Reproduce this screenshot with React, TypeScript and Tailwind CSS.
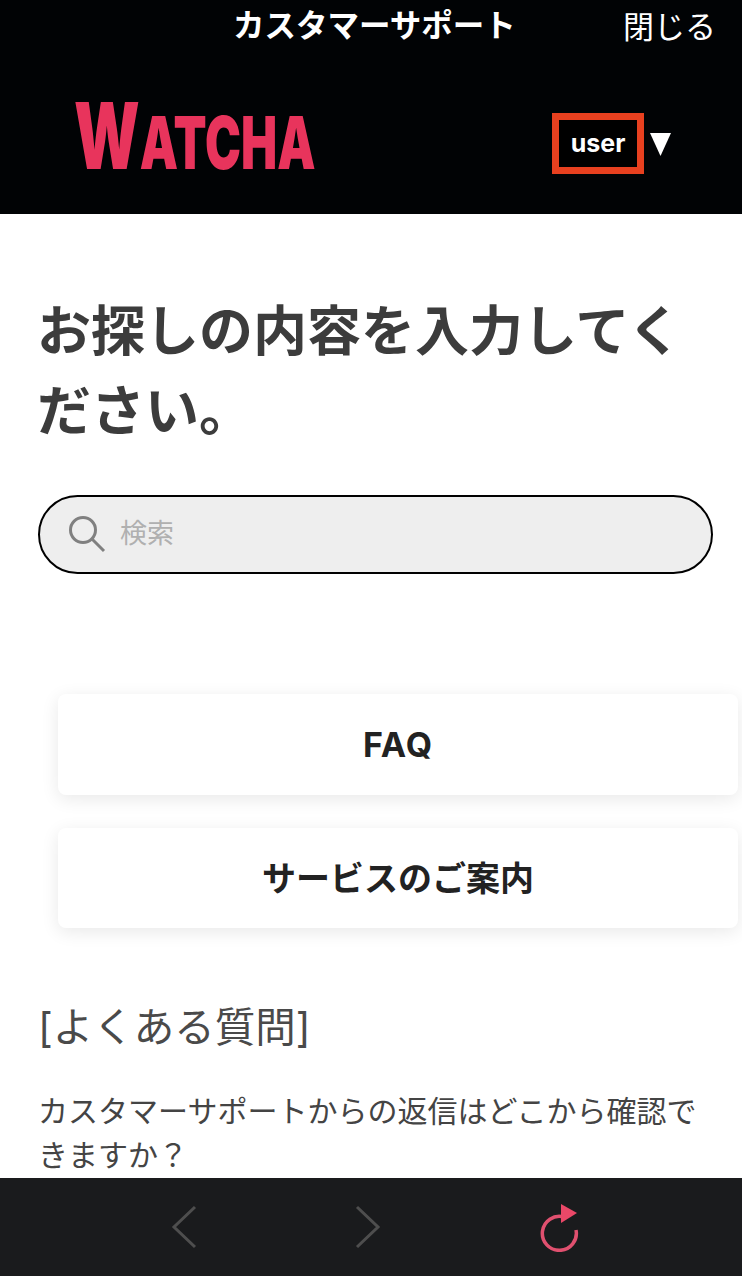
const jp = "font-['Inter','Noto_Sans_CJK_JP',sans-serif]";

export default function App() {
  return (
    <div className={`relative flex h-[1276px] w-[742px] flex-col overflow-hidden bg-white ${jp}`}>
      <header className="h-[214px] shrink-0 bg-[#010305]">
        <div className="flex h-[52px] items-center">
          <div className="ml-[233px] w-[340px] text-[31.5px] font-bold leading-none text-white">カスタマーサポート</div>
          <div className="ml-[50px] text-[31px] leading-none text-white">閉じる</div>
        </div>
        <div className="mt-[61px] flex h-[61px] items-center pl-[74px]">
          <div className="flex w-[478px] origin-left -translate-y-[8px] scale-x-[0.66] items-baseline font-black leading-none text-[#e8345c]">
            <span className="text-[92px]">W</span>
            <span className="text-[73px]">ATCHA</span>
          </div>
          <div className="flex h-[61px] w-[92px] items-center justify-center border-[7px] border-[#e8401f] bg-black text-[25px] font-bold text-white">user</div>
          <svg className="ml-[6px] mt-[2px]" width="21" height="23" viewBox="0 0 21 23" fill="#ffffff"><path d="M0 0h21L10.5 23z" /></svg>
        </div>
      </header>
      <main className="flex-1 overflow-hidden pt-[78px]">
        <h1 className="pl-[37px] pr-[38px] text-[54px] font-bold leading-[80px] text-[#3c3c3c]">お探しの内容を入力してください。</h1>
        <div className="ml-[38px] mr-[29px] mt-[43px] flex h-[79px] items-center rounded-full border-2 border-black bg-[#eeeeee] pl-[28px]">
          <svg className="-mt-[2px]" width="38" height="38" viewBox="0 0 38 38" fill="none" stroke="#808080" strokeWidth="3"><circle cx="15" cy="15" r="12.5" /><path d="M24 24l12 12" /></svg>
          <span className="ml-[14px] text-[27px] text-[#b0b0b0]">検索</span>
        </div>
        <div className="ml-[58px] mr-[4px] mt-[120px] flex flex-col gap-[33px]">
          <div className="flex h-[101px] items-center justify-center rounded-lg bg-white text-[34px] font-bold tracking-[1px] text-[#222222] shadow-[0_4px_18px_rgba(0,0,0,0.09)]">FAQ</div>
          <div className="flex h-[100px] items-center justify-center rounded-lg bg-white text-[34px] font-bold text-[#222222] shadow-[0_4px_18px_rgba(0,0,0,0.09)]">サービスのご案内</div>
        </div>
        <h2 className="mt-[72px] px-[38px] text-[40.5px] leading-[56px] text-[#4a4a4a]">[よくある質問]</h2>
        <p className="mt-[33px] px-[38px] text-[30px] leading-[44px] text-[#444444]">カスタマーサポートからの返信はどこから確認できますか？</p>
      </main>
      <nav className="absolute bottom-0 left-0 flex h-[98px] w-full items-center bg-[#1a1b1d]">
        <svg className="ml-[170px]" width="28" height="44" viewBox="0 0 28 44" fill="none" stroke="#4e4e4e" strokeWidth="3"><path d="M25 2L4 22l21 20" /></svg>
        <svg className="ml-[156px]" width="28" height="44" viewBox="0 0 28 44" fill="none" stroke="#4e4e4e" strokeWidth="3"><path d="M3 2l21 20L3 42" /></svg>
        <svg className="ml-[155px]" width="44" height="50" viewBox="0 0 44 50" fill="none"><path d="M27 15A17 17 0 1 0 39 28" stroke="#e0506f" strokeWidth="3.5" /><path d="M24 2l16 9-16 10z" fill="#ea4868" /></svg>
      </nav>
    </div>
  );
}
